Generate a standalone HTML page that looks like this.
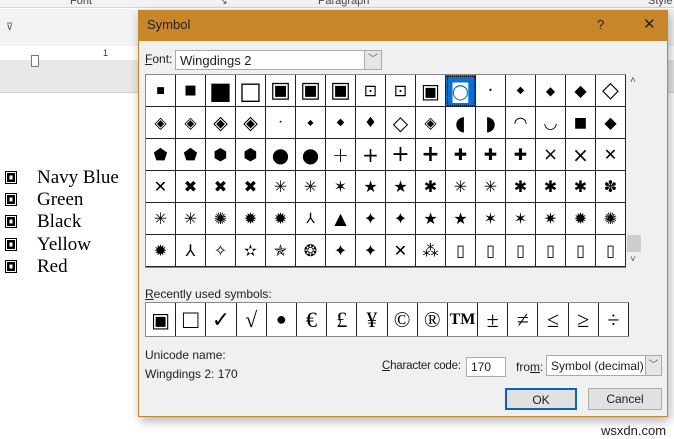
<!DOCTYPE html>
<html><head><meta charset="utf-8"><style>
*{margin:0;padding:0;box-sizing:border-box}
body{width:674px;height:439px;overflow:hidden;background:#fff;position:relative;font-family:"Liberation Sans","DejaVu Sans",sans-serif;font-size:12px;color:#1e1e1e}
.a{position:absolute}
.g{position:absolute;left:145px;top:74px;width:481px;height:194px;border:1px solid #888;background:#fff;display:grid;grid-template-columns:repeat(16,30px);grid-template-rows:repeat(6,32px)}
.g div{border-right:1px solid #222;border-bottom:1px solid #222;display:flex;align-items:center;justify-content:center;font-family:"DejaVu Sans",sans-serif;font-size:16px;color:#000;overflow:hidden}
.r{position:absolute;left:145px;top:302px;width:484px;height:35px;border:1px solid #888;background:#fff;display:grid;grid-template-columns:repeat(16,30.2px)}
.r div{border-right:1px solid #222;display:flex;align-items:center;justify-content:center;font-family:"Liberation Serif","DejaVu Serif",serif;font-size:22px;color:#000}
.li{position:absolute;left:5px;font-family:"Liberation Serif",serif;font-size:19px;color:#000}
.li span{display:inline-block;width:12px;height:13px;border:1.5px solid #000;margin-right:20px;vertical-align:-1px;box-shadow:inset 0 0 0 1px #fff,inset 0 0 0 3.5px #000,inset 0 0 0 12px #fff}
.btn{position:absolute;height:22px;background:#e1e1e1;border:1px solid #adadad;text-align:center;line-height:20px;font-size:12px}
</style></head><body>
<div class="a" style="left:0;top:0;width:674px;height:8px;background:#f3f3f3;border-bottom:1px solid #d6d6d6"></div>
<div class="a" style="left:70px;top:-5px;font-size:11px;color:#444">Font</div>
<div class="a" style="left:220px;top:-4px;font-size:9px;color:#444">↘</div>
<div class="a" style="left:318px;top:-5px;font-size:11px;color:#444">Paragraph</div>
<div class="a" style="left:648px;top:-5px;font-size:11px;color:#444">Style</div>
<div class="a" style="left:0;top:9px;width:674px;height:37px;background:#f3f3f3"></div>
<div class="a" style="left:6px;top:22px;font-size:10px;color:#555">⊽</div>
<div class="a" style="left:0;top:46px;width:674px;height:14px;background:#fff"></div>
<div class="a" style="left:0;top:60px;width:674px;height:33px;background:#e8e8e8;border-bottom:1px solid #d0d0d0"></div>
<div class="a" style="left:31px;top:55px;width:8px;height:12px;border:1px solid #777;background:#fff"></div>
<div class="a" style="left:103px;top:48px;font-size:9px;color:#333">1</div>
<div class="li" style="top:167px"><span></span>Navy Blue</div>
<div class="li" style="top:189px"><span></span>Green</div>
<div class="li" style="top:211px"><span></span>Black</div>
<div class="li" style="top:234px"><span></span>Yellow</div>
<div class="li" style="top:256px"><span></span>Red</div>
<div class="a" style="left:138px;top:10px;width:530px;height:407px;background:#f0f0f0;border:1px solid #c8862a;box-shadow:2px 4px 10px rgba(0,0,0,.3)"></div>
<div class="a" style="left:138px;top:10px;width:530px;height:31px;background:#c8862a"></div>
<div class="a" style="left:147px;top:17px;font-size:13px;color:#222">Symbol</div>
<div class="a" style="left:597px;top:17px;font-size:13px;color:#222">?</div>
<div class="a" style="left:643px;top:15px;font-size:15px;color:#222;font-weight:300">✕</div>
<div class="a" style="left:145px;top:52px"><u>F</u>ont:</div>
<div class="a" style="left:175px;top:50px;width:207px;height:20px;background:#fff;border:1px solid #aaa;padding:2px 4px;font-size:13px">Wingdings 2</div>
<div class="a" style="left:364px;top:51px;width:17px;height:18px;background:#e5e5e5;border-left:1px solid #aaa;text-align:center;font-size:10px;line-height:18px;color:#555">﹀</div>
<div class="g">
<div style="font-size:9px">■</div><div style="font-size:13px">■</div><div style="font-size:24px">■</div><div style="font-size:24px">□</div><div style="font-size:22px">▣</div><div style="font-size:22px">▣</div><div style="font-size:22px">▣</div><div>⊡</div><div>⊡</div><div style="font-size:20px">▣</div><div style="background:#0a6fd0;color:#fff;font-size:20px;outline:1px dotted #000;outline-offset:-2px">◙</div><div style="font-size:8px">•</div><div style="font-size:10px">◆</div><div style="font-size:12px">◆</div><div>◆</div><div style="font-size:22px">◇</div>
<div>◈</div><div>◈</div><div style="font-size:19px">◈</div><div style="font-size:19px">◈</div><div style="font-size:6px">•</div><div style="font-size:8px">◆</div><div style="font-size:10px">◆</div><div style="font-size:14px">♦</div><div style="font-size:20px">◇</div><div>◈</div><div style="font-size:20px">◖</div><div style="font-size:20px">◗</div><div>◠</div><div>◡</div><div style="font-size:14px">■</div><div>◆</div>
<div>⬟</div><div>⬟</div><div>⬢</div><div>⬢</div><div style="font-size:20px">●</div><div style="font-size:20px">●</div><div style="font-weight:200;font-size:20px">+</div><div style="font-size:20px">+</div><div style="font-size:22px">+</div><div style="font-size:22px;font-weight:bold">+</div><div>✚</div><div>✚</div><div>✚</div><div style="font-size:18px">×</div><div style="font-size:20px">×</div><div>✕</div>
<div>✕</div><div>✖</div><div>✖</div><div>✖</div><div>✳</div><div>✳</div><div>✶</div><div>★</div><div>★</div><div>✱</div><div>✳</div><div>✳</div><div>✱</div><div>✱</div><div>✱</div><div>✽</div>
<div>✳</div><div>✳</div><div>✺</div><div>✹</div><div>✹</div><div style="font-size:14px">⅄</div><div>▲</div><div>✦</div><div>✦</div><div>★</div><div>★</div><div>✶</div><div>✶</div><div>✷</div><div>✹</div><div>✺</div>
<div>✹</div><div>⅄</div><div>✧</div><div>✫</div><div>✯</div><div>❂</div><div>✦</div><div>✦</div><div>✕</div><div>⁂</div><div>▯</div><div>▯</div><div>▯</div><div>▯</div><div>▯</div><div>▯</div>
</div>
<div class="a" style="left:630px;top:75px;font-size:10px;color:#555">˄</div>
<div class="a" style="left:627px;top:235px;width:14px;height:17px;background:#cdcdcd"></div>
<div class="a" style="left:630px;top:254px;font-size:10px;color:#555">˅</div>
<div class="a" style="left:145px;top:287px"><u>R</u>ecently used symbols:</div>
<div class="r">
<div style="font-family:'DejaVu Sans';font-size:20px">▣</div><div style="font-size:26px">□</div><div>✓</div><div>√</div><div style="font-size:18px">●</div><div>€</div><div>£</div><div>¥</div><div>©</div><div>®</div><div style="font-size:16px;font-weight:bold">TM</div><div>±</div><div>≠</div><div>≤</div><div>≥</div><div>÷</div>
</div>
<div class="a" style="left:145px;top:348px">Unicode name:</div>
<div class="a" style="left:145px;top:367px">Wingdings 2: 170</div>
<div class="a" style="left:382px;top:360px;font-size:11.5px;letter-spacing:-0.2px"><u>C</u>haracter code:</div>
<div class="a" style="left:466px;top:357px;width:40px;height:20px;background:#fff;border:1px solid #aaa;padding:2px 4px">170</div>
<div class="a" style="left:516px;top:360px">fro<u>m</u>:</div>
<div class="a" style="left:546px;top:355px;width:116px;height:21px;background:#fff;border:1px solid #aaa;padding:3px 4px">Symbol (decimal)</div>
<div class="a" style="left:645px;top:356px;width:16px;height:19px;background:#e5e5e5;border-left:1px solid #aaa;text-align:center;font-size:10px;line-height:19px;color:#555">﹀</div>
<div class="btn" style="left:505px;top:388px;width:72px;border:2px solid #0a64b8">OK</div>
<div class="btn" style="left:588px;top:388px;width:74px">Cancel</div>
<div class="a" style="left:601px;top:423px;font-size:13px;color:#222">wsxdn.com</div>
</body></html>
